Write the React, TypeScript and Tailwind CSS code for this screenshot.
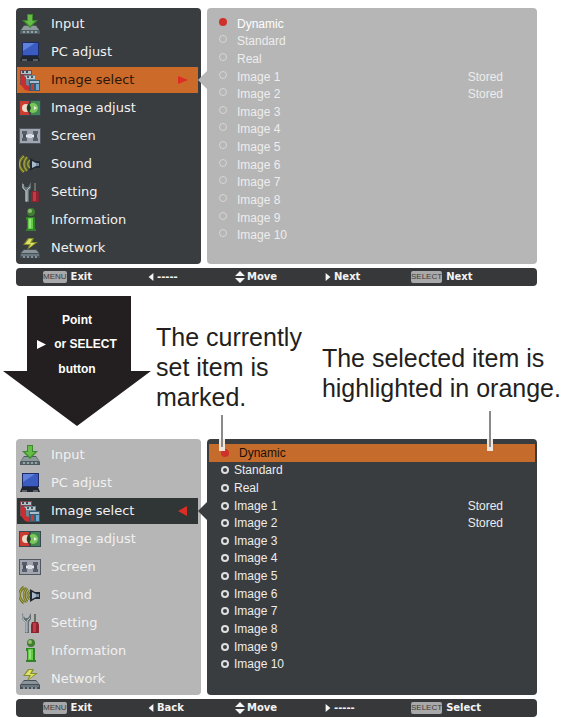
import React, { useState } from 'react'
import clsx from 'clsx'

type Tone = 'dark' | 'light'

type Hint = {
  icon?: 'left' | 'updown' | 'right';
  badge?: string;
  text: string;
}

const InputIcon = () => (
  <svg viewBox="0 0 22 22" className="size-[22px]">
    <path d="M5 12h12l4 6v3H1v-3z" fill="#4d5a60" />
    <path d="M5 13h12l3 4H2z" fill="#8d9a9c" />
    <path d="M2 18h18v2H2z" fill="#56676d" />
    <path d="M4 19h2M8 19h2M12 19h2M16 19h2" stroke="#d4dede" />
    <path d="M8 1h6v6h5l-8 8-8-8h5z" fill="#3d8a2c" />
    <path d="M9 2h4v6h3l-5 5-5-5h3z" fill="#66bd48" />
  </svg>
)

const PcIcon = () => (
  <svg viewBox="0 0 22 22" className="size-[22px]">
    <path d="M3 1h17v14H3z" fill="#1d2b66" />
    <path d="M4 2h15v12H4z" fill="#3a5cc0" />
    <path d="M4 2h12L4 10z" fill="#5f83dc" />
    <path d="M3 15h16l2 5H1z" fill="#20262f" />
    <path d="M3 19h5M14 19h5" stroke="#959ba0" strokeWidth="1" />
  </svg>
)

const ImageSelectIcon = () => (
  <svg viewBox="0 0 22 24" className="h-6 w-[22px]">
    <path d="M1 2h12v15H1z" fill="#844548" />
    <path d="M2 3h10v3H2z" fill="#aec0c8" />
    <path d="M3 4h2M7 4h2" stroke="#394b55" strokeWidth="2" />
    <path d="M5 7h12v13H5z" fill="#6d8592" />
    <path d="M6 8h10v3H6z" fill="#b9cbd2" />
    <path d="M8 9h2M12 9h2" stroke="#455863" strokeWidth="2" />
    <path d="M10 12h11v11H10z" fill="#345d7a" />
    <path d="M11 13h9v2h-9z" fill="#a8bfc9" />
    <path d="M12 16h3v6h-3z" fill="#bf4037" />
    <path d="M17 16h3v6h-3z" fill="#72a5ca" />
    <path d="M2 7l5 2v8l3 1v5l-4-1-4-5z" fill="#c92e31" />
  </svg>
)

const ImageAdjustIcon = () => (
  <svg viewBox="0 0 22 22" className="size-[22px]">
    <path d="M0 3h22v16H0z" fill="#334850" />
    <path d="M1 4h9v14H1z" fill="#c83c31" />
    <path d="M12 4h9v14h-9z" fill="#438451" />
    <ellipse cx="7" cy="11" rx="4" ry="4" fill="#ecd8c4" />
    <ellipse cx="14" cy="11" rx="5" ry="5" fill="#78c75b" />
    <path d="M10 6c-3 3-3 7 0 10l2-5z" fill="#263c2a" />
    <path d="M15 9l3 2-3 2z" fill="#e8edda" />
  </svg>
)

const ScreenIcon = () => (
  <svg viewBox="0 0 22 22" className="size-[22px]">
    <path d="M0 3h22v16H0z" fill="#50575f" />
    <path d="M1 4h20v14H1z" fill="#a0a5b0" />
    <path d="M3 6h5v3H3zM14 6h5v3h-5zM3 13h5v3H3zM14 13h5v3h-5z" fill="#565d68" />
    <path d="M4 9h3v4H4zM15 9h3v4h-3z" fill="#4a515c" />
    <path d="M9 9h4v4H9z" fill="#d9dce3" />
    <path d="M7 10h2v2H7zM13 10h2v2h-2z" fill="#e6e9ee" />
  </svg>
)

const SoundIcon = () => (
  <svg viewBox="0 0 22 22" className="size-[22px]">
    <path d="M5 3c-6 5-6 11 0 16M8 4c-4 5-4 9 0 14M11 7c-3 3-3 5 0 8" fill="none" stroke="#6e7426" strokeWidth="3" />
    <path d="M5 3c-6 5-6 11 0 16M8 4c-4 5-4 9 0 14M11 7c-3 3-3 5 0 8" fill="none" stroke="#b0ae4a" />
    <path d="M11 5l5 3h5v7h-5l-5 3z" fill="#202936" />
    <path d="M13 8l4 2v3l-4 2z" fill="#a8b9ca" />
    <path d="M17 10h3v3h-3z" fill="#75899d" />
  </svg>
)

const SettingIcon = () => (
  <svg viewBox="0 0 22 22" className="size-[22px]">
    <path d="M3 1v6l3 3v11h4V10l2-3V1l-3 5H6z" fill="#657177" />
    <path d="M4 3v4l3 3v10h1V9l3-3" fill="none" stroke="#b7c3c7" strokeWidth="1" />
    <path d="M15 2h2v8h-2z" fill="#657066" />
    <path d="M13 10h6l1 3v8h-8v-8z" fill="#8e2430" />
    <path d="M14 11h3v9h-3z" fill="#c23a47" />
  </svg>
)

const InformationIcon = () => (
  <svg viewBox="0 0 22 24" className="h-6 w-[22px]">
    <circle cx="12" cy="4" r="4" fill="#407d30" />
    <circle cx="11" cy="3" r="2" fill="#91bc71" />
    <path d="M7 9h9v12h1v2H7v-2h1v-9H7z" fill="#31822b" />
    <path d="M9 10h5v11H9z" fill="#64ca48" />
    <path d="M10 11h2v9h-2z" fill="#91e477" />
  </svg>
)

const NetworkIcon = () => (
  <svg viewBox="0 0 22 22" className="size-[22px]">
    <path d="M5 12h12l4 5v4H1v-4z" fill="#454f58" />
    <path d="M5 13h12l3 3H2z" fill="#8b9599" />
    <path d="M2 18h18" stroke="#6b7880" strokeWidth="2" />
    <path d="M4 20h2M8 20h2M12 20h2M16 20h2" stroke="#ccd3d7" />
    <path d="M9 1h6l-2 4h6L8 13l2-5H4z" fill="#83912a" />
    <path d="M10 2h3l-2 4h5l-6 5 2-4H6z" fill="#dfe266" />
  </svg>
)

const menu = [
  { label: 'Input', Icon: InputIcon },
  { label: 'PC adjust', Icon: PcIcon },
  { label: 'Image select', Icon: ImageSelectIcon },
  { label: 'Image adjust', Icon: ImageAdjustIcon },
  { label: 'Screen', Icon: ScreenIcon },
  { label: 'Sound', Icon: SoundIcon },
  { label: 'Setting', Icon: SettingIcon },
  { label: 'Information', Icon: InformationIcon },
  { label: 'Network', Icon: NetworkIcon },
]

const modes = [
  'Dynamic', 'Standard', 'Real', 'Image 1', 'Image 2', 'Image 3', 'Image 4',
  'Image 5', 'Image 6', 'Image 7', 'Image 8', 'Image 9', 'Image 10',
]

const stored = ['Image 1', 'Image 2']

const MenuPanel = ({ tone }: { tone: Tone }) => {
  const dark = tone === 'dark'
  return (
    <nav className={clsx('rounded-sm py-0.5 pl-px pr-[3px]', dark ? 'bg-[#3a3d3f]' : 'bg-[#b6b6b6]')}>
      {menu.map(({ label, Icon }) => {
        const current = label === 'Image select'
        return (
          <div key={label} className="relative flex h-7 items-center">
            <button
              type="button"
              className={clsx(
                'flex h-[26px] w-full items-center gap-2.5 pl-0.5 text-left font-["DejaVu_Sans"] text-[13px] leading-4',
                current && dark && 'bg-[#cc6b29] text-[#2b160b]',
                current && !dark && 'bg-[#303536] text-[#f0f0f0]',
                !current && 'text-[#f1f1f1]',
              )}
            >
              <Icon />
              <span className="flex-1 font-medium">{label}</span>
              {current && (
                <svg viewBox="0 0 10 10" className="mr-2.5 size-2.5" fill="#dc2e24">
                  {dark ? <path d="M0 1l10 4-10 4z" /> : <path d="M9 0v10L0 5z" />}
                </svg>
              )}
            </button>
            {current && (
              <svg viewBox="0 0 9 18" className="absolute left-full h-[18px] w-[9px]" fill={dark ? '#b6b6b6' : '#3a3d3f'}>
                <path d="M9 0v18L0 9z" />
              </svg>
            )}
          </div>
        )
      })}
    </nav>
  )
}

const ModePanel = ({ tone, name }: { tone: Tone; name: string }) => {
  const [mode, setMode] = useState('Dynamic')
  const dark = tone === 'dark'
  return (
    <fieldset
      className={clsx(
        'flex min-w-0 flex-col rounded-sm px-0.5 font-["Liberation_Sans"] text-[12px] leading-4',
        dark ? 'bg-[#3a3d3f] pb-[22px] pt-[5px] text-[#ececec]' : 'bg-[#b6b6b6] pb-5 pt-[7px] text-[#ededed]',
      )}
    >
      {modes.map((item) => {
        const on = item === mode
        return (
          <label
            key={item}
            className={clsx(
              'flex flex-1 items-center pr-8',
              dark ? 'pl-3' : 'pl-2.5',
              dark && on && 'bg-[#c56c2d] text-[#1d100a]',
              !dark && on && 'text-white',
            )}
          >
            <input
              type="radio"
              name={name}
              checked={on}
              onChange={() => setMode(item)}
              className={clsx(
                'size-2 shrink-0 appearance-none rounded-full',
                !dark && 'mb-1',
                on && 'bg-[#cf3029]',
                !on && dark && 'border-2 border-[#dedede]',
                !on && !dark && 'border border-[#d6d6d6]',
              )}
            />
            <span className={clsx('flex-1', dark && !on ? 'pl-[5px]' : 'pl-2.5')}>{item}</span>
            {stored.includes(item) && <span>Stored</span>}
          </label>
        )
      })}
    </fieldset>
  )
}

const HintIcon = ({ icon }: { icon: Hint['icon'] }) => (
  <svg viewBox="0 0 10 12" className={clsx('h-3 shrink-0', icon === 'updown' ? 'w-2.5' : 'w-2')} fill="#f5f5f5">
    {icon === 'left' && <path d="M8 1v10L2 6z" />}
    {icon === 'right' && <path d="M2 1v10l6-5z" />}
    {icon === 'updown' && <path d="M5 0l5 5H0zM5 12l5-5H0z" />}
  </svg>
)

const HintBar = ({ hints }: { hints: Hint[] }) => (
  <footer className='mt-1 grid h-[18px] grid-cols-[104fr_88fr_89fr_87fr_126fr] items-center rounded-sm bg-[#363839] pl-[27px] font-["DejaVu_Sans"] text-[10px] font-bold leading-3 text-[#f3f3f3]'>
    {hints.map(({ icon, badge, text }, i) => (
      <button key={i} type="button" className={clsx('flex items-center', badge ? 'gap-1' : 'gap-0.5')}>
        {icon && <HintIcon icon={icon} />}
        {badge && (
          <kbd className='rounded-xs bg-[#a9a9a9] font-["Liberation_Sans"] text-[8px] font-normal text-[#3c3c3c]'>{badge}</kbd>
        )}
        <span>{text}</span>
      </button>
    ))}
  </footer>
)

const firstHints: Hint[] = [
  { badge: 'MENU', text: 'Exit' },
  { icon: 'left', text: '-----' },
  { icon: 'updown', text: 'Move' },
  { icon: 'right', text: 'Next' },
  { badge: 'SELECT', text: 'Next' },
]

const secondHints: Hint[] = [
  { badge: 'MENU', text: 'Exit' },
  { icon: 'left', text: 'Back' },
  { icon: 'updown', text: 'Move' },
  { icon: 'right', text: '-----' },
  { badge: 'SELECT', text: 'Select' },
]

const Osd = ({ menuTone, listTone, name, hints }: { menuTone: Tone; listTone: Tone; name: string; hints: Hint[] }) => (
  <section className="ml-4 mr-[30px]">
    <div className="grid grid-cols-[185fr_330fr] gap-1.5">
      <MenuPanel tone={menuTone} />
      <ModePanel tone={listTone} name={name} />
    </div>
    <HintBar hints={hints} />
  </section>
)

// leader line from a caption down into the list
const Leader = ({ className }: { className: string }) => (
  <span className={clsx('absolute top-full z-10 flex w-2 flex-col items-center', className)}>
    <span className="w-0.5 flex-1 bg-[#8a8a8a]" />
    <span className="flex h-3 w-1.5 justify-center bg-[#f5e6dc]">
      <span className="h-2 w-0.5 bg-[#8a8a8a]" />
    </span>
  </span>
)

const App = () => {
  return (
    <main className="bg-white pt-2">
      <Osd menuTone="dark" listTone="light" name="mode-preview" hints={firstHints} />

      <div className='flex items-start pb-[13px] pl-[3px] font-["Liberation_Sans"]'>
        <div className="relative mt-2.5 h-[130px] w-[148px] shrink-0">
          <svg viewBox="0 0 148 130" className="absolute inset-0 size-full" fill="#231f20">
            <path d="M24 0h104v75h20l-74 55L0 75h24z" />
          </svg>
          <p className="relative pt-3 text-center text-[12px] font-bold leading-6 text-white">
            Point<br />
            <span className="inline-flex items-center gap-2">
              <svg viewBox="0 0 9 9" className="size-[9px]" fill="white"><path d="M0 0l9 4.5L0 9z" /></svg>
              or SELECT
            </span><br />
            button
          </p>
        </div>

        <p className="relative ml-[5px] mt-9 whitespace-nowrap text-[25px] leading-[30px] text-[#231f20]">
          The currently<br />set item is<br />marked.
          <Leader className="left-[62px] mt-[3px] h-9" />
        </p>

        <p className="relative ml-5 mt-[57px] whitespace-nowrap text-[25px] leading-[30px] text-[#231f20]">
          The selected item is<br />highlighted in orange.
          <Leader className="left-[164px] mt-2 h-10" />
        </p>
      </div>

      <Osd menuTone="light" listTone="dark" name="mode-select" hints={secondHints} />
    </main>
  )
}

export default App
